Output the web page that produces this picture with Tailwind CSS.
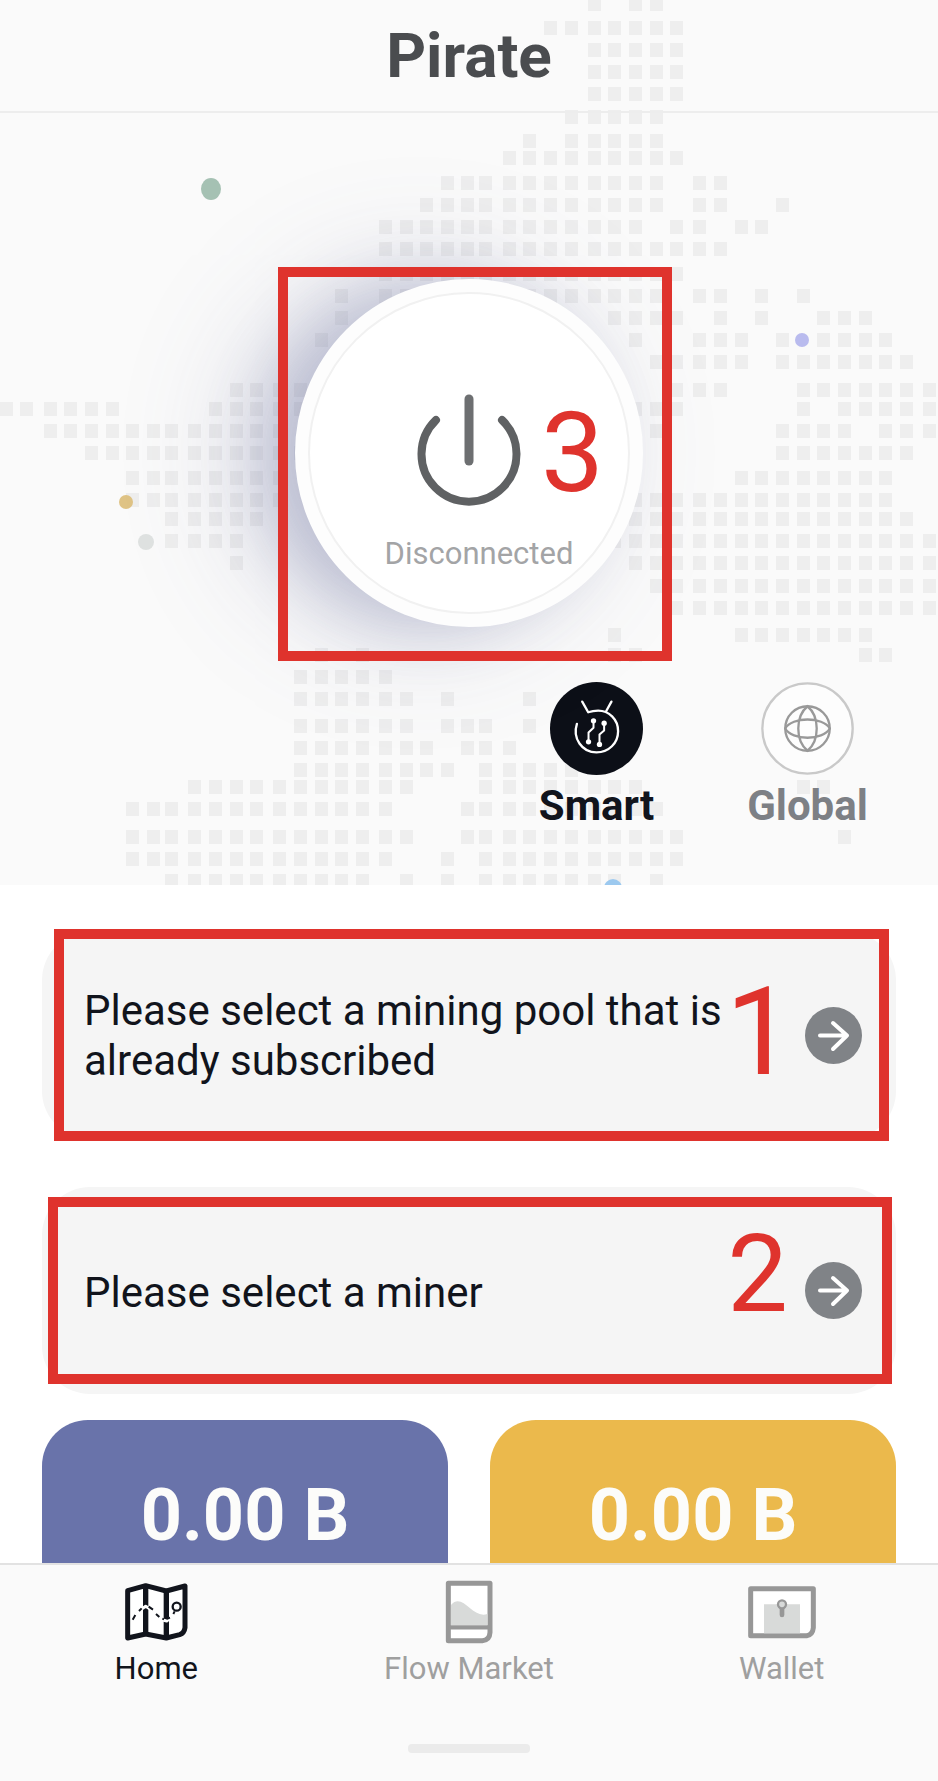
<!DOCTYPE html>
<html lang="en">
<head>
<meta charset="utf-8">
<meta name="viewport" content="width=device-width, initial-scale=1">
<title>Pirate</title>
<script src="https://cdn.jsdelivr.net/npm/@tailwindcss/browser@4"></script>
</head>
<body class="flex h-screen flex-col overflow-hidden bg-white font-['Roboto',sans-serif] text-[#11141c]">
  <main class="min-h-0 flex-1 overflow-hidden">
    <section class="relative isolate overflow-hidden bg-[#fafafa] pb-[55px]">
      <!-- dotted world map -->
      <svg id="map" class="absolute inset-0 -z-20 h-full w-full" viewBox="0 0 938 885" preserveAspectRatio="xMidYMin slice" aria-hidden="true">
        <g id="tiles" fill="#eeeeee"></g>
        <ellipse cx="211" cy="189" rx="10" ry="11" fill="#a5c1b3"/>
        <circle cx="802" cy="340" r="7" fill="#b9bbee"/>
        <circle cx="126" cy="502" r="7" fill="#dfc385"/>
        <circle cx="146" cy="542" r="8" fill="#dfe2e1"/>
        <circle cx="613" cy="888" r="9" fill="#9cc9ef"/>
      </svg>
      <header class="flex h-[113px] items-center justify-center border-b-2 border-[#ededed]">
        <h1 class="text-[62px] leading-none font-bold text-[#4a4c4f]">Pirate</h1>
      </header>

      <div class="mt-[166px] flex justify-center">
        <div class="relative size-[348px]">
          <button type="button" class="flex size-full flex-col items-center rounded-full border-[14px] border-[#fdfdfd] bg-white pt-[101px] shadow-[-36px_0_60px_rgba(85,90,145,0.24),-50px_0_130px_rgba(85,90,140,0.22)] outline-2 -outline-offset-[15px] outline-[#f1f1f1]">
            <svg class="h-[112px] w-[104px]" viewBox="0 0 104 112" fill="none" stroke-linecap="round" aria-hidden="true">
              <path d="M19 26A47.500 47.500 0 1 0 85 26" stroke="#5f6163" stroke-width="8"/>
              <path d="M52 5V67" stroke="#6d6f71" stroke-width="9"/>
            </svg>
            <span class="mt-7 pl-5 text-[31px] leading-10 text-[#a3a4a6]">Disconnected</span>
          </button>
          <div class="pointer-events-none absolute -top-3 -left-[17px] size-[394px] border-[10px] border-[#df332d]"></div>
          <span class="pointer-events-none absolute top-[118px] left-[246px] text-[112px] leading-none text-[#df332d]">3</span>
        </div>
      </div>

      <div class="mt-[55px] flex justify-end pr-[25px]">
        <button type="button" class="flex w-[211px] flex-col items-center gap-[7px]">
          <svg class="size-[93px]" viewBox="59 36 280 280" fill="none" stroke="#fff" stroke-linecap="round" stroke-linejoin="round" aria-hidden="true">
            <circle cx="199" cy="176" r="140" fill="#0c0f17" stroke="none"/>
            <path d="M140 162C126 205 155 248 199 248C236 248 264 220 264 184C264 148 236 122 204 122Q188 122 174 127L156 95M228 124L244 95" stroke-width="7"/>
            <path d="M190 155V174L175 188V215M222 161V182L208 194V223" stroke-width="6"/>
            <g fill="#fff" stroke="none"><circle cx="190" cy="153" r="8"/><circle cx="222" cy="160" r="8"/><circle cx="175" cy="216" r="8"/><circle cx="208" cy="224" r="8"/></g>
          </svg>
          <span class="text-[42px] leading-12 font-bold">Smart</span>
        </button>
        <button type="button" class="flex w-[211px] flex-col items-center gap-[7px] text-[#7d8085]">
          <svg class="size-[93px]" viewBox="693 36 280 280" fill="none" stroke="#999" stroke-width="7" aria-hidden="true">
            <circle cx="833" cy="176" r="136" fill="#fdfdfd" stroke="#c9c9c9"/>
            <circle cx="833" cy="176" r="67"/>
            <path d="M833 109C796 140 796 212 833 243C870 212 870 140 833 109ZM766 176C786 140 880 140 900 176C880 213 786 213 766 176Z"/>
          </svg>
          <span class="text-[42px] leading-12 font-bold">Global</span>
        </button>
      </div>
    </section>

    <section class="flex flex-col gap-12 px-[42px] pt-[47px]">
      <div class="relative">
        <button type="button" class="flex h-[207px] w-full items-center justify-between rounded-[48px] bg-[#f5f5f5] pr-[34px] pl-[42px] text-left">
          <span class="w-[650px] text-[42px] leading-[50px]">Please select a mining pool that is already subscribed</span>
          <svg class="size-[57px]" viewBox="0 0 57 57" fill="none" aria-hidden="true"><circle cx="28.500" cy="28.500" r="28.500" fill="#808387"/><path d="M15 28.500H42M28 16L42 28.500L28 42" stroke="#fff" stroke-width="4" stroke-linecap="round" stroke-linejoin="round"/></svg>
        </button>
        <div class="pointer-events-none absolute -top-[3px] right-[7px] -bottom-[2px] left-3 border-[10px] border-[#df332d]"></div>
        <span class="pointer-events-none absolute top-10 right-[102px] text-[122px] leading-none text-[#df332d]">1</span>
      </div>
      <div class="relative">
        <button type="button" class="flex h-[207px] w-full items-center justify-between rounded-[48px] bg-[#f5f5f5] pr-[34px] pl-[42px] text-left">
          <span class="pt-1 text-[42px] leading-[50px]">Please select a miner</span>
          <svg class="size-[57px]" viewBox="0 0 57 57" fill="none" aria-hidden="true"><circle cx="28.500" cy="28.500" r="28.500" fill="#808387"/><path d="M15 28.500H42M28 16L42 28.500L28 42" stroke="#fff" stroke-width="4" stroke-linecap="round" stroke-linejoin="round"/></svg>
        </button>
        <div class="pointer-events-none absolute top-[10px] right-1 bottom-[10px] left-1.5 border-[10px] border-[#df332d]"></div>
        <span class="pointer-events-none absolute top-[33px] right-[108px] text-[108px] leading-none text-[#df332d]">2</span>
      </div>
    </section>

    <section class="mt-[26px] grid grid-cols-2 gap-[42px] px-[42px] text-center text-[72px] leading-[84px] font-bold text-[#fcfcfa]">
      <div class="h-[260px] rounded-[46px] bg-[#6973aa] pt-[54px]">0.00 B</div>
      <div class="h-[260px] rounded-[46px] bg-[#ebb94c] pt-[54px]">0.00 B</div>
    </section>
  </main>

  <nav class="shrink-0 border-t-2 border-[#e2e2e2] bg-[#fafafa] pt-[15px] pb-7 text-[31px] leading-10 text-[#9f9f9f]">
    <div class="grid grid-cols-3">
      <a href="#home" aria-current="page" class="flex flex-col items-center gap-[5px] text-[#11141c]">
        <svg class="h-16 w-[63px]" viewBox="75 47 189 192" fill="none" stroke="#11141c" stroke-linejoin="round" aria-hidden="true">
          <path d="M83 79L137 64L199 80L255 65V190Q253 206 239 211L199 221L137 209L83 221Z" fill="#fff" stroke-width="15"/>
          <path d="M137 66V207M199 80V220" stroke-width="16"/>
          <path d="M125 134L137 126L150 134M188 167L200 170L212 160" stroke="#fff" stroke-width="9"/>
          <path d="M98 166L106 152M117 140L125 132M146 127L159 136M168 149L178 158M187 163L192 165M199 164L210 160M220 149L224 141" stroke-width="6"/>
          <circle cx="230" cy="127" r="12" stroke-width="7"/>
        </svg>
        <span>Home</span>
      </a>
      <a href="#market" class="flex flex-col items-center gap-[5px]">
        <svg class="h-16 w-12" viewBox="72 47 144 192" fill="none" stroke="#979797" stroke-width="15" stroke-linejoin="round" aria-hidden="true">
          <path d="M82 57H207V204Q206 227 184 229H82Z" fill="#fff"/>
          <path d="M90 122C125 82 155 166 199 149V182H90Z" fill="#d8dad9" stroke="none"/>
          <path d="M82 189H207" stroke-width="13"/>
        </svg>
        <span>Flow Market</span>
      </a>
      <a href="#wallet" class="flex flex-col items-center gap-[5px]">
        <svg class="h-16 w-[68px]" viewBox="48 47 204 192" fill="none" stroke="#979797" stroke-width="15" stroke-linejoin="round" aria-hidden="true">
          <path d="M56 73H244V190Q242 211 224 214H56Z" fill="#fff"/>
          <path d="M96 120H204V207H96Z" fill="#d8dad9" stroke="none"/>
          <path d="M150 130V152" stroke-linecap="round" stroke-width="14"/>
          <circle cx="150" cy="120" r="12" fill="#d8dad9" stroke-width="7"/>
        </svg>
        <span>Wallet</span>
      </a>
    </div>
    <div class="mx-auto mt-[55px] h-[9px] w-[122px] rounded-sm bg-[#ebebeb]"></div>
  </nav>

<script>
// Column x positions and, per row, its y followed by inclusive column ranges.
const X = [0,20,44,64,85,106,126,147,165,188,209,230,250,273,294,315,335,356,379,400,420,441,461,479,503,523,544,565,588,608,629,650,670,693,714,735,755,776,797,817,838,859,879,900,923];
const ROWS = `-3 28 30-31
21 26-32
43 28-32
65 28-32
87 28-32
110 27-31
134 25 27-31
151 24-32
176 21-31 33-34
198 20-31 33-34 37
220 18-30 32-33 35-36
242 18-34
267 18-32
289 16 18-31 33-34 36 38
311 16 29-32 34 36 39-41
333 15 30 33-35 37 39-42
355 31-35 37-43
383 11-14 32-34 38-44
402 0-5 10-14 30-32 38 40-44
424 2-13 31 37-40 42-44
446 4-14 37-43
471 6-13 35-42
493 6-13 30-42
512 8-12 30-43
534 8-11 29-44
556 11 30-44
579 31-44
601 32-44
628 29 35-41
648 15 17 29-30 41-42
670 14-18
692 14-19 21 25
719 14-19 21-23 25
741 14-20 22-24
763 14-21 23-27
780 9-19 23-30 38-39
802 6-18 22-31
830 6-19 22-32 40
852 6-18 21 23-32
874 8-17 19 21 23-29 31`;
let d = '';
for (const row of ROWS.split('\n')) {
  const [y, ...ranges] = row.split(' ');
  for (const r of ranges) {
    const [a, b = a] = r.split('-').map(Number);
    for (let i = a; i <= b; i++) d += `M${X[i]} ${y}h13v14h-13z`;
  }
}
const p = document.createElementNS('http://www.w3.org/2000/svg', 'path');
p.setAttribute('d', d);
document.getElementById('tiles').append(p);
</script>
</body>
</html>
